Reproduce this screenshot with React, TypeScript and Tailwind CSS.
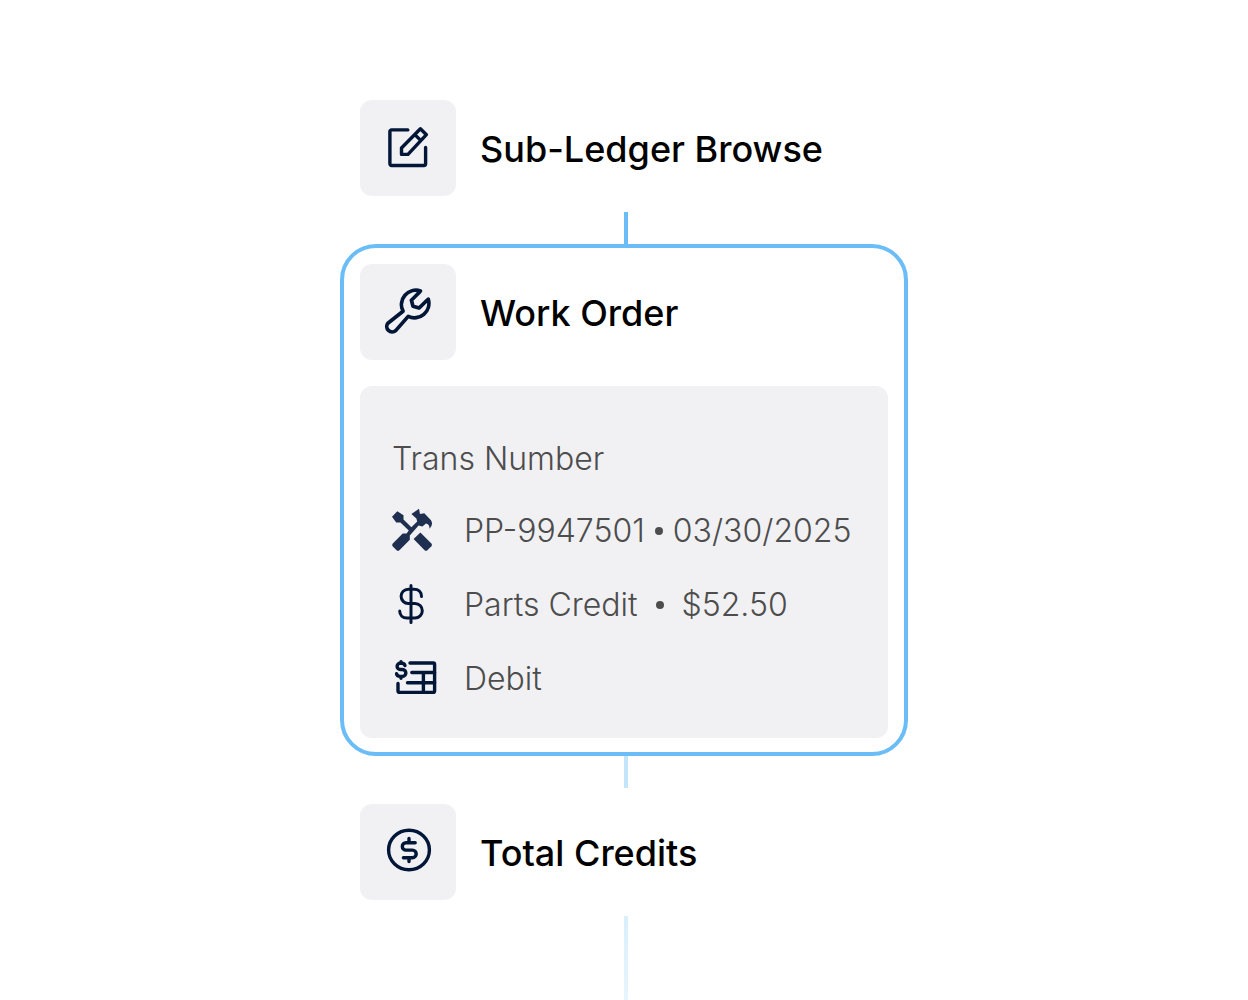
import type { ReactNode } from 'react'

const stroke = {
  fill: 'none',
  stroke: 'currentColor',
  strokeWidth: 3.4,
  strokeLinecap: 'round',
  strokeLinejoin: 'round',
} as const

function EditIcon() {
  return (
    <svg viewBox="0 0 48 48" className="size-12" {...stroke}>
      <path d="M23.8 5.9H7.6a1.7 1.7 0 0 0-1.7 1.7v32.2a1.7 1.7 0 0 0 1.7 1.7h32.3a1.7 1.7 0 0 0 1.7-1.7V23.5" />
      <path d="M17.5 30.4V24L36.4 4.8l6 5.9L24 30.4zM30.8 10.6l5.9 5.8" />
    </svg>
  )
}

function WrenchIcon() {
  return (
    <svg viewBox="0 0 48 48" className="size-12" {...stroke} strokeWidth={3.7}>
      <path d="M36.4 2.9C35 5 30.5 9 27.4 12.3L29 18.2L35 20C38 17.5 41.5 13.5 44.3 11.2A14.5 14.5 0 0 1 24.2 28.4L11.7 42.6A5.4 5.4 0 0 1 3.9 35.2L19 23.2A14.5 14.5 0 0 1 36.4 2.9Z" />
    </svg>
  )
}

function CoinIcon() {
  return (
    <svg viewBox="0 0 48 48" className="size-12" {...stroke}>
      <ellipse cx="25" cy="22" rx="20.4" ry="19.7" />
      <path d="M31.2 14.7H22a3.7 3.7 0 0 0 0 7.4h6.4a3.8 3.8 0 0 1 0 7.6h-9M25 10.5v4M25 30v3.6" />
    </svg>
  )
}

function ToolsIcon() {
  return (
    <svg viewBox="0 -1 48 48" className="size-12 text-[#1f2f4f]" fill="currentColor">
      <path d="M0 8.7L5.3 3.3L11.5 7.3V11.6L19.4 19.2L25.2 13.4L24.4 10.6L19.4 6L27 .8L28 6L32.3 5.2L39 12.2Q41.6 16.4 37.6 20.8Q37.4 16 34 15.6L30.4 18.4L26.6 17.4L17.8 27.4V31.8L7.4 42.2Q6 43.4 4.6 42.2L.8 38.4Q-.4 37 .8 35.6L10.7 25.4H14.6L16.8 22.6L8.4 14.4H4.2Z" />
      <path d="M21.6 31L28.4 24.6L39.4 35.4Q40.6 36.8 39.4 38.2L35.4 42.2Q34 43.4 32.6 42.2Z" />
    </svg>
  )
}

function DollarIcon() {
  return (
    <svg viewBox="0 -3 48 48" className="size-12" {...stroke} strokeWidth={3}>
      <path d="M19 1.5v37M29.5 12.6C29.5 8 26.5 5.2 22 5.2H16.2a7.1 7.1 0 0 0 0 14.2h6.8a7.3 7.3 0 0 1 0 14.6H15C10.8 34 7.7 31.2 7.7 27" />
    </svg>
  )
}

function LedgerIcon() {
  return (
    <svg viewBox="0 0 48 48" className="size-12" {...stroke}>
      <path d="M18 8H41.2a1.4 1.4 0 0 1 1.4 1.4V36a1.4 1.4 0 0 1-1.4 1.4H7.4A1.4 1.4 0 0 1 6 36V28.4" />
      <path d="M19.8 17.5H42.6M15.5 27.7H42.6M31.4 17.5V37.4" />
      <path d="M13 10.6C12.6 9 11.4 8.3 9.8 8.3H8.2a3 3 0 0 0 0 6.2h2.2a3.4 3.4 0 0 1 0 6.9H8C6 21.4 4.8 20.4 4.6 18.8M9 6.6v1.4M9 21.6v1.6" />
    </svg>
  )
}

function StepHeader({ icon, title }: { icon: ReactNode; title: string }) {
  return (
    <div className="flex items-center gap-6">
      <div className="flex size-24 shrink-0 items-center justify-center rounded-xl bg-[#f1f1f4]">
        {icon}
      </div>
      <h2 className="pt-0.5 text-4xl font-medium text-black">{title}</h2>
    </div>
  )
}

function DetailRow({ icon, children }: { icon: ReactNode; children: ReactNode }) {
  return (
    <li className="flex items-center gap-6 leading-12">
      <span className="shrink-0 text-[#021637]">{icon}</span>
      {children}
    </li>
  )
}

function Dot() {
  return <span className="size-2 shrink-0 rounded-full bg-[#4d4d4d]" />
}

export default function App() {
  return (
    <main className="flex min-h-screen justify-center bg-white pt-25 font-['Inter',sans-serif]">
      <div className="flex w-full max-w-[568px] flex-col text-[#021637]">
        <div className="px-5">
          <StepHeader icon={<EditIcon />} title="Sub-Ledger Browse" />
        </div>
        <div className="mt-4 ml-1 h-8 w-1 self-center bg-[#6abdf7]" />

        <section className="rounded-[36px] border-4 border-[#6abdf7] px-4 pt-4 pb-3.5">
          <StepHeader icon={<WrenchIcon />} title="Work Order" />
          <div className="mt-6.5 rounded-xl bg-[#f1f1f4] pt-[49px] pr-8 pb-[35px] pl-8 text-[32px] font-light text-[#4d4d4d]">
            <h3 className="leading-12">Trans Number</h3>
            <ul className="mt-6 flex flex-col gap-6.5">
              <DetailRow icon={<ToolsIcon />}>
                <span className="flex items-center gap-2.5 whitespace-nowrap">
                  PP-9947501 <Dot /> 03/30/2025
                </span>
              </DetailRow>
              <DetailRow icon={<DollarIcon />}>
                <span className="flex items-center gap-4.5 whitespace-nowrap">
                  Parts Credit <Dot /> $52.50
                </span>
              </DetailRow>
              <DetailRow icon={<LedgerIcon />}>Debit</DetailRow>
            </ul>
          </div>
        </section>

        <div className="ml-1 h-8 w-1 self-center bg-[#c3e5fc]" />
        <div className="mt-4 px-5">
          <StepHeader icon={<CoinIcon />} title="Total Credits" />
        </div>
        <div className="mt-4 ml-1 min-h-21 w-1 flex-1 self-center bg-linear-to-b from-[#d9effd] to-[#e6f5fe]" />
      </div>
    </main>
  )
}
